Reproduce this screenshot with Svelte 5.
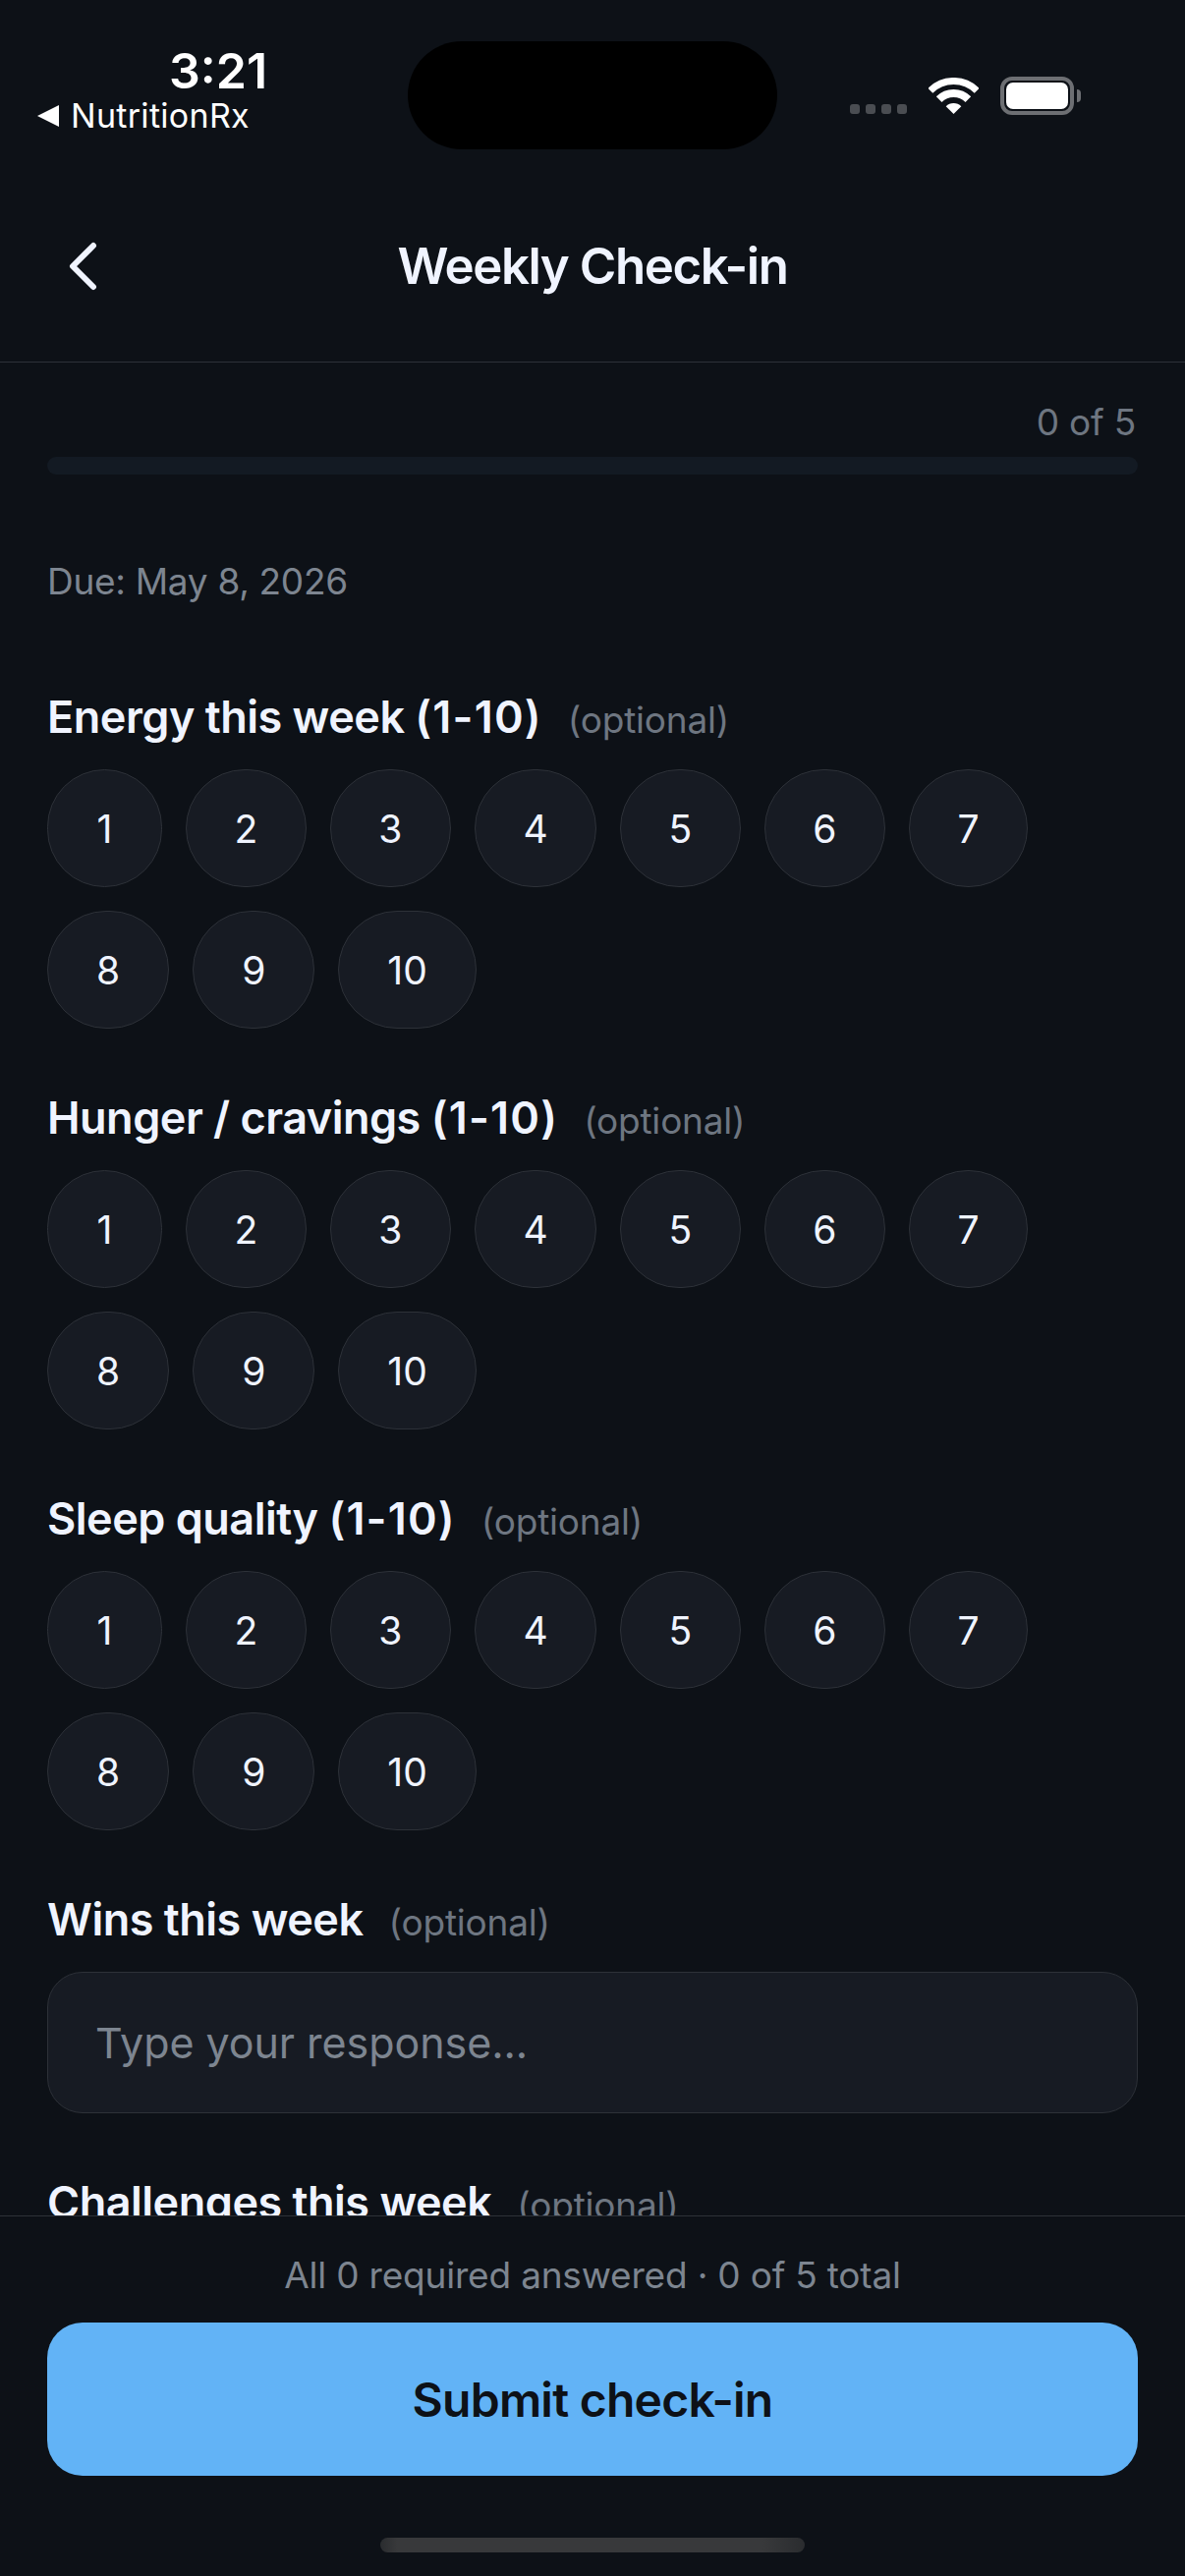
<script>
    const scales = ['Energy this week', 'Hunger / cravings', 'Sleep quality']
    const numbers = [1, 2, 3, 4, 5, 6, 7, 8, 9, 10]
</script>

<div class="screen">
    <div class="status">
        <div class="status-left">
            <span class="time">3:21</span>
            <span class="back-app"><i class="tri"></i>NutritionRx</span>
        </div>
        <div class="island"></div>
        <div class="status-right">
            <div class="dots"><i></i><i></i><i></i><i></i></div>
            <svg class="wifi" width="51" height="37" viewBox="0 0 51 37" aria-hidden="true">
                <path d="M1.8 13.3A33.5 33.5 0 0 1 49.2 13.3" fill="none" stroke="#fff" stroke-width="7"/>
                <path d="M10.65 22.15A21 21 0 0 1 40.35 22.15" fill="none" stroke="#fff" stroke-width="8"/>
                <path d="M25.5 37L17.7 29.2A11 11 0 0 1 33.3 29.2Z" fill="#fff"/>
            </svg>
            <div class="battery"><div class="cell"></div></div>
            <div class="nub"></div>
        </div>
    </div>

    <header>
        <svg class="chev" width="36" height="60" viewBox="0 0 36 60" aria-hidden="true">
            <path d="M29 9L8 30L29 51" fill="none" stroke="#f0f4ff" stroke-width="6" stroke-linecap="round" stroke-linejoin="round"/>
        </svg>
        <h1>Weekly Check-in</h1>
    </header>

    <div class="scroll">
        <div class="progress">
            <div class="count">0 of 5</div>
            <div class="track"></div>
        </div>
        <p class="due">Due: May 8, 2026</p>

        {#each scales as title}
            <section>
                <div class="label"><span class="name">{title} <span class="range">(1-10)</span></span><span class="opt">(optional)</span></div>
                <div class="pills">
                    {#each numbers as n}
                        <button class="pill">{n}</button>
                    {/each}
                </div>
            </section>
        {/each}

        <section>
            <div class="label"><span class="name">Wins this week</span><span class="opt">(optional)</span></div>
            <div class="input">Type your response...</div>
        </section>
        <section>
            <div class="label"><span class="name">Challenges this week</span><span class="opt">(optional)</span></div>
        </section>
    </div>

    <footer>
        <p class="summary">All 0 required answered · 0 of 5 total</p>
        <button class="submit">Submit check-in</button>
        <div class="home"></div>
    </footer>
</div>

<style>
    :global(body) {
        margin: 0;
        background: #0d1117;
    }
    .screen {
        width: 1206px;
        height: 2622px;
        display: flex;
        flex-direction: column;
        overflow: hidden;
        background: #0d1117;
        color: #f0f4ff;
        font-family: Inter, "Liberation Sans", sans-serif;
    }
    .status {
        height: 174px;
        flex: none;
        display: flex;
        padding: 42px 0 0 38px;
        box-sizing: border-box;
    }
    .status-left {
        width: 377px;
        display: flex;
        flex-direction: column;
        color: #fff;
    }
    .time {
        font-size: 50px;
        font-weight: 600;
        line-height: 60px;
        margin-left: 134px;
    }
    .back-app {
        display: flex;
        align-items: center;
        gap: 12px;
        font-size: 34px;
        font-weight: 400;
        letter-spacing: 0.3px;
        line-height: 36px;
        margin-top: -2px;
    }
    .tri {
        width: 0;
        height: 0;
        border-top: 11px solid transparent;
        border-bottom: 11px solid transparent;
        border-right: 22px solid #fff;
    }
    .island {
        width: 376px;
        height: 110px;
        border-radius: 55px;
        background: #000;
        flex: none;
    }
    .status-right {
        display: flex;
        align-items: flex-start;
        padding: 36px 0 0 74px;
    }
    .dots {
        display: flex;
        gap: 6px;
        margin: 28px 22px 0 0;
    }
    .dots i {
        width: 10px;
        height: 10px;
        border-radius: 3px;
        background: #4a4d52;
    }
    .wifi {
        display: block;
        margin: 1px 22px 0 0;
    }
    .battery {
        width: 75px;
        height: 39px;
        box-sizing: border-box;
        border: 4px solid #6d6f73;
        border-radius: 12px;
        padding: 2px;
    }
    .cell {
        height: 100%;
        background: #fff;
        border-radius: 7px;
    }
    .nub {
        width: 4px;
        height: 13px;
        margin: 13px 0 0 3px;
        background: #6d6f73;
        border-radius: 0 4px 4px 0;
    }
    header {
        height: 195px;
        flex: none;
        box-sizing: border-box;
        border-bottom: 1px solid #2d3138;
        display: flex;
        align-items: center;
        justify-content: center;
        position: relative;
    }
    .chev {
        position: absolute;
        left: 66px;
        top: 67px;
    }
    h1 {
        margin: 0;
        font-size: 51px;
        font-weight: 600;
        letter-spacing: -1.45px;
        line-height: 60px;
    }
    .scroll {
        flex: 1;
        min-height: 0;
        overflow: hidden;
        padding: 0 48px;
    }
    .progress {
        padding-top: 38px;
    }
    .count {
        text-align: right;
        font-size: 37px;
        line-height: 46px;
        letter-spacing: -0.2px;
        color: #6e7681;
        padding-right: 2px;
    }
    .track {
        height: 18px;
        margin-top: 12px;
        border-radius: 9px;
        background: #131a23;
    }
    .due {
        margin: 81px 0 80px;
        font-size: 37px;
        line-height: 56px;
        letter-spacing: -0.3px;
        color: #7d8590;
    }
    section {
        margin-top: 61px;
    }
    .label {
        display: flex;
        align-items: baseline;
        gap: 26px;
        height: 60px;
        line-height: 60px;
        margin-bottom: 23px;
    }
    .name {
        font-size: 45px;
        font-weight: 600;
        letter-spacing: -0.5px;
    }
    .range {
        letter-spacing: 1.2px;
    }
    .opt {
        font-size: 37px;
        letter-spacing: -0.2px;
        color: #6e7681;
    }
    .pills {
        display: flex;
        flex-wrap: wrap;
        gap: 24px;
    }
    .pill {
        height: 120px;
        min-width: 117px;
        padding: 0 48.5px;
        box-sizing: border-box;
        border: 1.5px solid #2d3138;
        border-radius: 60px;
        background: #171b23;
        color: #f0f4ff;
        font-family: inherit;
        font-size: 39px;
        font-weight: 400;
    }
    .pill:nth-child(n+8) {
        padding: 0 49px;
    }
    .input {
        height: 144px;
        box-sizing: border-box;
        border: 1.5px solid #2d3138;
        border-radius: 36px;
        background: #171b23;
        padding: 0 48px;
        display: flex;
        align-items: center;
        font-size: 43px;
        letter-spacing: -0.05px;
        color: #7d8590;
    }
    footer {
        height: 367px;
        flex: none;
        box-sizing: border-box;
        border-top: 1px solid #2d3138;
        background: #0d1117;
        padding: 0 48px;
        display: flex;
        flex-direction: column;
        align-items: center;
    }
    .summary {
        margin: 36px 0 0;
        font-size: 37px;
        line-height: 48px;
        letter-spacing: -0.2px;
        color: #7d8590;
        text-align: center;
    }
    .submit {
        width: 100%;
        height: 156px;
        flex: none;
        margin-top: 24px;
        border: none;
        border-radius: 36px;
        background: #62b3f6;
        color: #0d1117;
        font-family: inherit;
        font-size: 48px;
        font-weight: 600;
        letter-spacing: -0.75px;
    }
    .home {
        width: 432px;
        height: 15px;
        margin-top: 63px;
        border-radius: 8px;
        background: linear-gradient(90deg, #2a2c2f, #38393b 4%, #38393b 90%, #2a2c2f);
        flex: none;
    }
</style>
